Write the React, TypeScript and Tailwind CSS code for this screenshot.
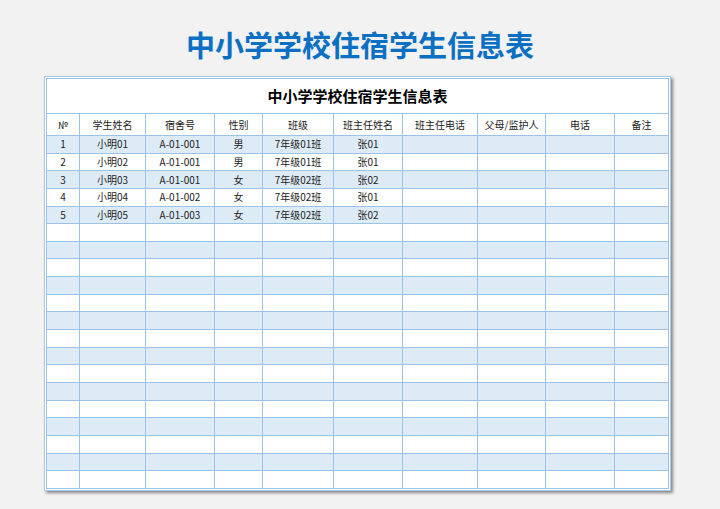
const cols = [33, 66, 69, 48, 71, 69, 75, 68, 69, 54];
const heads = ["№", "学生姓名", "宿舍号", "性别", "班级", "班主任姓名", "班主任电话", "父母/监护人", "电话", "备注"];
const data = [
  ["1", "小明01", "A-01-001", "男", "7年级01班", "张01"],
  ["2", "小明02", "A-01-001", "男", "7年级01班", "张01"],
  ["3", "小明03", "A-01-001", "女", "7年级02班", "张02"],
  ["4", "小明04", "A-01-002", "女", "7年级02班", "张01"],
  ["5", "小明05", "A-01-003", "女", "7年级02班", "张02"],
];
const rows = Array.from({ length: 20 }, (_, i) => data[i] ?? []);

export default function App() {
  return (
    <div
      className="w-[720px] h-[509px] bg-[#f1f2f1] flex flex-col items-center overflow-hidden"
      style={{ fontFamily: '"Noto Sans CJK SC", "Liberation Sans", sans-serif' }}
    >
      <h1 className="mt-[26px] h-[36px] text-[29px] leading-[36px] font-bold text-[#0b6fc3]">中小学学校住宿学生信息表</h1>
      <div className="mt-[14px] ml-[-5px] bg-white border border-[#a9cbe9] p-[1px] shadow-[2px_2px_3px_rgba(0,0,0,0.45)]">
        <table className="table-fixed border-collapse text-[10px] text-[#222]" style={{ width: 622 }}>
          <colgroup>
            {cols.map((w, i) => <col key={i} style={{ width: w }} />)}
          </colgroup>
          <tbody>
            <tr className="h-[35px]">
              <td colSpan={10} className="border border-[#9cc3e7] text-center text-[15px] font-bold text-black">中小学学校住宿学生信息表</td>
            </tr>
            <tr className="h-[22px]">
              {heads.map((h, i) => (
                <td key={i} className="border border-[#9cc3e7] text-center p-0">{h}</td>
              ))}
            </tr>
            {rows.map((r, ri) => (
              <tr key={ri} className={`h-[17.65px] ${ri % 2 === 0 ? "bg-[#ddebf7]" : "bg-white"}`}>
                {cols.map((_, ci) => (
                  <td key={ci} className="border border-[#9cc3e7] text-center p-0 leading-none">{r[ci] ?? ""}</td>
                ))}
              </tr>
            ))}
          </tbody>
        </table>
      </div>
    </div>
  );
}
